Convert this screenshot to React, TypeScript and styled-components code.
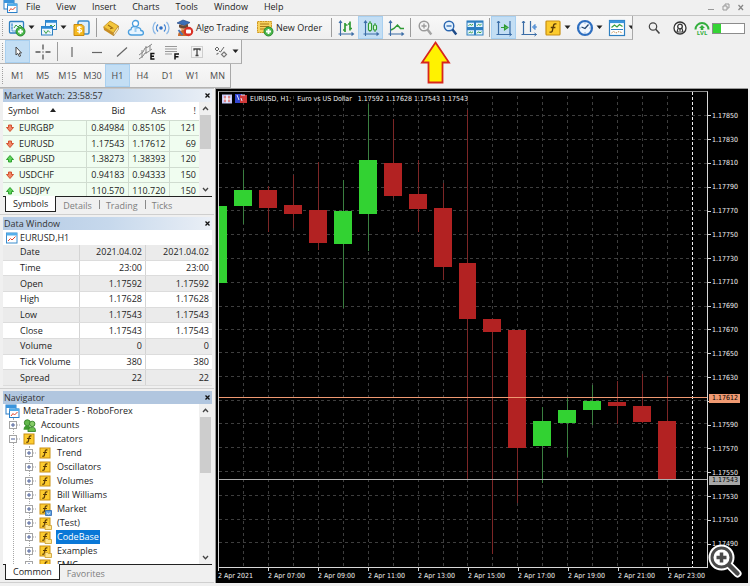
import React from "react";
import styled, { createGlobalStyle, css } from "styled-components";

const UI = `"Open Sans", "Noto Sans", sans-serif`;
const CHART = `"DejaVu Sans Condensed", "DejaVu Sans", "Noto Sans", sans-serif`;

const GlobalStyle = createGlobalStyle`
  *, *::before, *::after { box-sizing: border-box; }
  body { margin: 0; background: #f0f0f0; font-family: ${UI}; font-size: 9px; color: #1c1c1c; }
  button { font: inherit; color: inherit; background: none; border: 0; padding: 0; margin: 0; }
  svg { display: block; flex: none; }
  ul { list-style: none; margin: 0; padding: 0; }
`;

/* ---------- layout ---------- */

const Page = styled.div`
  position: relative;
  display: flex;
  flex-direction: column;
  height: 100vh;
  min-height: 480px;
  overflow: hidden;
  background: #f0f0f0;
`;

const MenuBar = styled.nav`
  display: flex;
  align-items: center;
  height: 16px;
  padding: 0 5px 2px 3px;
  border-bottom: 1px solid #c4c4c4;
`;

const MenuItems = styled.div`
  display: flex;
  gap: 16px;
  margin-left: 8px;
`;

const WindowButtons = styled.div`
  display: flex;
  gap: 7px;
  margin-left: auto;
`;

const ToolRow = styled.div`
  display: flex;
  height: 24px;
`;

const Strip = styled.div`
  display: flex;
  align-items: stretch;
  padding-left: 5px;
  border-right: 1px solid #a8a8a8;
  border-bottom: 1px solid #b4b4b4;
  background: linear-gradient(#f8f8f8, #efefef);
  position: relative;
  &::before {
    content: "";
    position: absolute;
    left: 2px;
    top: 3px;
    bottom: 3px;
    border-left: 1px dotted #a0a0a0;
  }
`;

const StatusArea = styled.div`
  display: flex;
  align-items: center;
  gap: 2px;
  margin-left: auto;
  padding-right: 5px;
`;

const Tool = styled.button<{ $active?: boolean; $width?: number; $left?: boolean }>`
  display: flex;
  align-items: center;
  justify-content: ${(p) => (p.$left ? "flex-start" : "center")};
  gap: 2px;
  width: ${(p) => p.$width ?? 25}px;
  padding-left: ${(p) => (p.$left ? 3 : 0)}px;
  overflow: hidden;
  white-space: nowrap;
  ${(p) =>
    p.$active &&
    css`
      background: #c3def4;
      box-shadow: inset 0 0 0 1px #a9d0f0;
    `}
`;

const TimeframeTool = styled(Tool)`
  color: #4c4c4c;
`;

const Divider = styled.span`
  width: 4px;
  padding: 2px 0;
  display: flex;
  justify-content: center;
  &::before {
    content: "";
    width: 1px;
    background: #9c9c9c;
  }
`;

const Gauge = styled.div`
  width: 33px;
  height: 11px;
  border: 1px solid #8c8c8c;
  background: #fff;
  &::before {
    content: "";
    display: block;
    width: 8px;
    height: 9px;
    background: #35d435;
  }
`;

const Workspace = styled.main`
  flex: 1;
  min-height: 0;
  display: flex;
  gap: 1px;
  padding: 0 2px 3px 0;
`;

const Sidebar = styled.aside`
  display: flex;
  flex-direction: column;
  gap: 2px;
  width: 214px;
  flex: none;
  border-top: 1px solid #c8c8c8;
`;

/* ---------- dock panels ---------- */

const Panel = styled.section<{ $grow?: boolean }>`
  display: flex;
  flex-direction: column;
  padding: 0 2px 1px 3px;
  border-bottom: 1px solid #cfcfcf;
  ${(p) => p.$grow && "flex: 1; min-height: 0;"}
`;

const PanelTitle = styled.header<{ $active?: boolean }>`
  display: flex;
  align-items: center;
  justify-content: space-between;
  height: 13px;
  padding: 0 2px 0 1px;
  font-size: 9px;
  line-height: 13px;
  color: #333;
  background: ${(p) =>
    p.$active ? "#b1c6df" : "linear-gradient(90deg, #b4cae4 0%, #c6d8ec 50%, #eaeff6 100%)"};
  h2 { margin: 0; font: inherit; }
`;

const PanelBody = styled.div<{ $grow?: boolean }>`
  display: flex;
  background: #fff;
  overflow: hidden;
  ${(p) => p.$grow && "flex: 1; min-height: 0;"}
`;

const MarketBody = styled(PanelBody)`
  height: 94px;
`;

const ScrollTrack = styled.div`
  display: flex;
  flex-direction: column;
  align-items: center;
  width: 13px;
  flex: none;
  background: #f0f0f0;
`;

const ScrollArrow = styled.button`
  display: flex;
  align-items: center;
  justify-content: center;
  width: 13px;
  height: 13px;
`;

const ScrollThumb = styled.div<{ $height: number }>`
  width: 11px;
  height: ${(p) => p.$height}px;
  margin-bottom: auto;
  background: #cdcdcd;
`;

const MarketTable = styled.table`
  flex: 1;
  height: 97px;
  border-collapse: collapse;
  table-layout: fixed;
  line-height: 12px;
  th, td { padding: 0 3px; text-align: right; font-weight: 400; white-space: nowrap; }
  th { height: 18px; background: #fff; }
  th:first-child { text-align: left; padding-left: 5px; }
  td { background: #f0fdf0; border: 1px solid #d0dcd0; border-left: 0; }
  td:last-child { border-right: 0; }
`;

const SymbolCell = styled.span`
  display: flex;
  align-items: center;
  gap: 5px;
`;

const SortMark = styled.span`
  display: inline-block;
  margin: 0 0 2px 11px;
  border: 3px solid transparent;
  border-top: 0;
  border-bottom: 4px solid #222;
`;

const Tabs = styled.div`
  display: flex;
  height: 17px;
  border-top: 1px solid #222;
  background: #f0f0f0;
  line-height: 15px;
`;

const Tab = styled.button<{ $active?: boolean }>`
  position: relative;
  height: 16px;
  padding: 0 7px;
  color: #7e7e7e;
  ${(p) =>
    p.$active
      ? css`
          margin: -1px 0 0 2px;
          color: #1c1c1c;
          background: #fff;
          border: 1px solid #222;
          border-top: 0;
        `
      : css`
          & + &::before {
            content: "";
            position: absolute;
            left: 0;
            top: 3px;
            height: 9px;
            border-left: 1px solid #8a8a8a;
          }
        `}
`;

const DataHeading = styled.h3`
  display: flex;
  align-items: center;
  gap: 2px;
  height: 15px;
  margin: 0;
  padding-left: 3px;
  font: inherit;
  background: #fff;
`;

const DataTable = styled.table`
  width: 100%;
  height: 141px;
  margin-bottom: 1px;
  border-collapse: collapse;
  table-layout: fixed;
  line-height: 12px;
  background: #fff;
  tr:nth-child(odd) { background: #ebebeb; }
  th, td { padding: 0 3px; font-weight: 400; text-align: right; border-bottom: 1px solid #dcdcdc; }
  th { width: 76px; text-align: left; padding-left: 17px; }
  td { border-left: 1px solid #d4d4d4; }
`;

const Tree = styled.ul`
  flex: 1;
  overflow: hidden;
  height: 100%;
`;

const TreeBox = styled.div`
  flex: 1;
  min-width: 0;
  overflow: hidden;
`;

const Branch = styled.ul`
  position: relative;
  margin-left: 10px;
  &::before {
    content: "";
    position: absolute;
    left: 0;
    top: 0;
    bottom: 0;
    border-left: 1px dotted #a8a8a8;
  }
`;

const SubBranch = styled(Branch)`
  margin-left: 16px;
`;

const TreeRow = styled.div<{ $root?: boolean }>`
  display: flex;
  align-items: center;
  height: 14px;
  gap: 2px;
  padding-left: ${(p) => (p.$root ? 2 : 0)}px;
  line-height: 14px;
`;

const Expander = styled.button`
  position: relative;
  width: 12px;
  height: 8px;
  margin-left: -4px;
  display: flex;
`;

const Label = styled.span<{ $selected?: boolean }>`
  margin-left: 2px;
  padding: 0 1px;
  ${(p) => p.$selected && "background: #0a78d7; color: #fff;"}
`;

const RootLabel = styled(Label)`
  margin-left: 0;
`;

/* ---------- chart ---------- */

const ChartFrame = styled.section`
  position: relative;
  flex: 1;
  min-width: 0;
  display: grid;
  grid-template-columns: 1fr 40px;
  grid-template-rows: 1fr 15px;
  padding: 2px 0 0 2px;
  background: #000;
  border: 1px solid #9a9a9a;
  border-right: 0;
  border-bottom: 0;
  color: #f0f0f0;
  font-family: ${CHART};
  font-size: 7px;
`;

const Plot = styled.div`
  position: relative;
  min-width: 0;
  min-height: 0;
  border: 1px solid #d8d8d8;
  border-top-color: #8c8c8c;
  > svg { width: 100%; height: 100%; }
`;

const ChartTitle = styled.div`
  position: absolute;
  left: 3px;
  top: 2px;
  display: flex;
  align-items: center;
  gap: 3px;
  height: 10px;
  white-space: pre;
`;

const TitlePart = styled.span`
  margin-left: 3px;
`;

const PriceAxis = styled.div`
  position: relative;
  display: grid;
  grid-auto-rows: 1fr;
  padding: 13px 0 12px;
  min-height: 0;
`;

const PriceMark = styled.span`
  display: flex;
  align-items: center;
  gap: 1px;
  min-height: 0;
  line-height: 8px;
  &::before {
    content: "";
    width: 3px;
    height: 1px;
    background: #d8d8d8;
  }
`;

const PriceTag = styled.span<{ $top: string; $color: string }>`
  position: absolute;
  left: 1px;
  top: ${(p) => p.$top};
  width: 31px;
  height: 9px;
  margin-top: -5px;
  padding-left: 3px;
  line-height: 9px;
  color: #000;
  background: ${(p) => p.$color};
`;

const TimeAxis = styled.div`
  display: grid;
  grid-template-columns: repeat(9, 10fr) 8fr;
`;

const TimeMark = styled.span`
  min-width: 0;
  white-space: nowrap;
  line-height: 10px;
  &::before {
    content: "";
    display: block;
    width: 1px;
    height: 3px;
    background: #d8d8d8;
  }
`;

const Magnifier = styled.button`
  position: absolute;
  right: 6px;
  bottom: 5px;
`;

const Pointer = styled.div`
  position: absolute;
  left: 420px;
  top: 40px;
`;

/* ---------- icons ---------- */

const Icon = ({ children, size = 18 }: { children: React.ReactNode; size?: number }) => (
  <svg width={size} height={size} viewBox={`0 0 ${size} ${size}`} fill="none" aria-hidden="true">
    {children}
  </svg>
);

const Caret = () => (
  <svg width="7" height="5" viewBox="0 0 7 5" aria-hidden="true">
    <path d="M0.5 0.5h6L3.5 4z" fill="#222" />
  </svg>
);

const AppLogo = () => (
  <Icon size={15}>
    <rect x="1" y="1" width="10" height="9" fill="#fff" stroke="#2a7fc8" />
    <rect x="1" y="1" width="10" height="3" fill="#3a94dc" />
    <rect x="4.500" y="5" width="9.500" height="8.500" fill="#fff" stroke="#2a7fc8" />
    <rect x="4.500" y="4.500" width="9.500" height="2.500" fill="#55aeea" />
    <path d="M6 12l2-2.500 1.500 1.500 3-3" stroke="#e0442c" />
  </Icon>
);

const MiniChart = () => (
  <Icon size={12}>
    <rect x="0.500" y="1" width="10.500" height="10" fill="#fff" stroke="#3a8ccc" />
    <rect x="0.500" y="1" width="10.500" height="2.500" fill="#55aeea" />
    <path d="M2 9l2.500-2.500L6 8l3.500-3.500" stroke="#e0442c" />
  </Icon>
);

const NewChartIcon = () => (
  <Icon>
    <rect x="1.500" y="2.500" width="14" height="11.500" rx="1" fill="#eaf6ff" stroke="#2d7fc0" strokeWidth="1.300" />
    <path d="M4 4v8M3 6h2M3 9h2M4 12h9" stroke="#3a8ccc" strokeWidth=".8" />
    <path d="M6 9l2-3 2 2 2-2 2 2" stroke="#3aa040" />
    <circle cx="12.500" cy="12.500" r="4.500" fill="#49b64a" stroke="#2b8a30" />
    <path d="M12.500 10v5M10 12.500h5" stroke="#fff" strokeWidth="1.800" />
  </Icon>
);

const ProfilesIcon = () => (
  <Icon>
    <rect x="5.500" y="1.500" width="11" height="9" fill="#eaf6ff" stroke="#2d7fc0" />
    <path d="M5.500 2.500h11" stroke="#2d8ad6" strokeWidth="2.500" />
    <path d="M9 8l2-2 2 2 2-2" stroke="#3aa040" />
    <rect x="1.500" y="7.500" width="11" height="8.500" fill="#eaf6ff" stroke="#2d7fc0" />
    <path d="M1.500 8.500h11" stroke="#2d8ad6" strokeWidth="2.500" />
    <path d="M4 11.500l2 3 2-3 2 2" stroke="#3aa040" />
  </Icon>
);

const MarketIcon = () => (
  <Icon>
    <rect x="5" y="2" width="11" height="13" rx="1.500" fill="#dceffc" stroke="#3a8ccc" strokeWidth="1.500" />
    <path d="M1 5.500h8l2 2V16.500H1z" fill="#f4b921" stroke="#c98a10" />
    <path d="M8.500 8.500c-1-1-4.500-1-4 .8.400 1.400 3.600.6 4 2.200.3 1.700-3 1.800-4.200.6M6.300 7v7.500" stroke="#fff" strokeWidth="1.200" />
  </Icon>
);

const BookIcon = () => (
  <Icon>
    <path d="M1.500 8L8 2l8.500 5-5 7z" fill="#f3c63c" stroke="#c08a18" strokeWidth=".8" />
    <path d="M1.500 8l10 6v3L2 11z" fill="#c88d22" />
    <path d="M11.500 14l5-7v3l-5 7z" fill="#fff2c8" stroke="#a87620" strokeWidth=".6" />
    <path d="M6 6l4.500 3-2.500.8" stroke="#9c6c14" strokeWidth="1.200" />
  </Icon>
);

const CloudIcon = () => (
  <Icon>
    <circle cx="8.500" cy="4.500" r="3" fill="#fff" stroke="#4a9ede" strokeWidth="1.300" />
    <path d="M4.500 16c-4-.3-4-5-.6-5.300C4 7.500 8 6.500 9.500 9c3-1 4.700.6 4.300 2.500C17.500 12 17 16 14 16z" fill="#e8f5ff" stroke="#4a9ede" strokeWidth="1.300" />
    <path d="M8.500 8v5" stroke="#9cccf0" strokeWidth="2" />
  </Icon>
);

const SignalIcon = () => (
  <Icon>
    <circle cx="9" cy="9" r="1.800" fill="#2f6ec4" />
    <path d="M6 5.500a5 5 0 000 7M12 5.500a5 5 0 010 7" stroke="#4385d4" strokeWidth="1.300" />
    <path d="M3.500 3a8.400 8.400 0 000 12M14.500 3a8.400 8.400 0 010 12" stroke="#8db9e6" strokeWidth="1.300" />
  </Icon>
);

const AlgoIcon = () => (
  <Icon>
    <circle cx="8" cy="7.500" r="4" fill="#e0a070" />
    <path d="M1 4l6-3 7 2.500-5.500 3z" fill="#3b6fb8" stroke="#274c86" strokeWidth=".7" />
    <path d="M3 5.500v3l5 1 4-1V5L8 7z" fill="#6a4a34" />
    <path d="M2 17c0-4 2-6 6-6s5 2 5 6z" fill="#c96a2b" />
    <path d="M2.500 11l4 5" stroke="#4a78b8" strokeWidth="2" />
    <circle cx="12.500" cy="12.500" r="4.700" fill="#d93025" />
    <rect x="10" y="10.500" width="5" height="4" rx="1" fill="#fff" />
  </Icon>
);

const NewOrderIcon = () => (
  <Icon>
    <path d="M1.500 2.500h14v11h-14z" fill="#f8d25e" stroke="#d09a20" strokeDasharray="2 .5" />
    <path d="M4 5h9M4 7.500h9M4 10h7" stroke="#a87818" />
    <circle cx="12.500" cy="12.500" r="4.500" fill="#49b64a" stroke="#2b8a30" />
    <path d="M12.500 10v5M10 12.500h5" stroke="#fff" strokeWidth="1.800" />
  </Icon>
);

const Axes = () => (
  <path d="M3.500 2v13h13M2 4l1.500-2L5 4M14.500 13.500l2 1.500-2 1.500M1.500 15h2v2" stroke="#3a6ca6" strokeWidth="1.100" />
);

const BarsIcon = () => (
  <Icon>
    <Axes />
    <path d="M8 4v9M6 11h2M8 6h2.500M13 2.500v9M11 5h2M13 9.500h2" stroke="#2f9a34" strokeWidth="1.700" />
  </Icon>
);

const CandlesIcon = () => (
  <Icon>
    <Axes />
    <path d="M8 2v2M8 11v2M13 4v2M13 11v2" stroke="#2f9a34" />
    <rect x="6.500" y="4" width="3" height="7.500" rx="1" fill="#e6ffe6" stroke="#2f9a34" strokeWidth="1.200" />
    <rect x="11.500" y="6" width="3" height="5" rx="1" fill="#e6ffe6" stroke="#2f9a34" strokeWidth="1.200" />
  </Icon>
);

const LineIcon = () => (
  <Icon>
    <Axes />
    <path d="M4 11l3-1.500L10.500 6l3 3.500h3.500" stroke="#2f9a34" strokeWidth="1.500" />
  </Icon>
);

const ZoomIcon = ({ plus }: { plus?: boolean }) => {
  const c = plus ? "#9a9a9a" : "#2a66b0";
  return (
    <Icon>
      <circle cx="8" cy="7" r="4.800" fill={plus ? "#f4f4f4" : "#e2f0fc"} stroke={c} strokeWidth="1.400" />
      <path d="M11.500 10.500l3.800 5" stroke={plus ? "#a4a4a4" : "#1d4a88"} strokeWidth="2.400" />
      <path d={plus ? "M5.500 7h5M8 4.500v5" : "M5.500 7h5"} stroke={c} strokeWidth="1.300" />
    </Icon>
  );
};

const TileIcon = () => (
  <Icon>
    {[[1, 2], [9.5, 2], [1, 9.5], [9.5, 9.5]].map(([x, y]) => (
      <g key={`${x}-${y}`}>
        <rect x={x} y={y} width="7.500" height="6.500" fill="#e4f3ff" stroke="#2d7fc0" />
        <path d={`M${x} ${y + 0.8}h7.5`} stroke="#2d7fc0" strokeWidth="1.800" />
        <path d={`M${x + 1.5} ${y + 4.8}l1.500-1.500 1.500 1 1.500-1`} stroke="#3aa040" />
      </g>
    ))}
  </Icon>
);

const AutoScrollIcon = () => (
  <Icon>
    <path d="M3.500 2v13M1.500 15.500h15M15 2v14" stroke="#3a6ca6" strokeWidth="1.200" />
    <path d="M2 4l1.500-2L5 4M14.500 14l2 1.500-2 1.500" stroke="#3a6ca6" />
    <path d="M6 8.500h4M9.500 6l3.500 2.500L9.500 11z" stroke="#2f9a34" strokeWidth="1.100" fill="#5fc463" />
  </Icon>
);

const ShiftIcon = () => (
  <Icon>
    <path d="M3.500 2v13M1.500 15.500h15M10.500 2v11" stroke="#3a6ca6" strokeWidth="1.200" />
    <path d="M2 4l1.500-2L5 4M14.500 14l2 1.500-2 1.500" stroke="#3a6ca6" />
    <path d="M17 8h-2.500M15 5.500L12.500 8l2.500 2.500z" stroke="#3f80cc" fill="#8ebcf0" />
  </Icon>
);

const FxIcon = () => (
  <Icon>
    <rect x="2" y="2" width="14" height="14" rx="1" fill="#fccb2e" stroke="#c98f12" strokeWidth="1.200" />
    <path d="M12.500 5c-2-.6-2.800.2-3.200 2.300L8.400 11.500c-.3 1.500-1.200 2-2.900 1.500M6.800 8.500h4.600" stroke="#5a3a06" strokeWidth="1.300" />
  </Icon>
);

const ClockIcon = () => (
  <Icon>
    <circle cx="9" cy="9" r="7" fill="#f2f8ff" stroke="#2f6fc0" strokeWidth="2.200" />
    <path d="M9 3.500v1M9 13.500v1M3.500 9h1M13.500 9h1" stroke="#4d7cb4" />
    <path d="M5.500 8L9 9.500l3.500-4" stroke="#22456f" strokeWidth="1.300" />
  </Icon>
);

const TemplateIcon = () => (
  <Icon>
    <rect x="1.500" y="1.500" width="15" height="15" fill="#fff" stroke="#2d7fc0" strokeWidth="1.200" />
    <path d="M1.500 2.800h15" stroke="#3b95dc" strokeWidth="2.600" />
    <path d="M3.500 8.500l3-2.500 2.500 2 2.500-2.500 3 2" stroke="#3aa040" strokeWidth="1.300" />
    <path d="M3 10.500h12" stroke="#2d7fc0" />
    <path d="M3.500 14l2-1.500 2.500 1.500 3-1.500 3.500 1.500" stroke="#c08a4a" strokeDasharray="1.500 1" />
  </Icon>
);

const SearchIcon = () => (
  <Icon size={14}>
    <circle cx="6" cy="5.500" r="3.700" stroke="#444" strokeWidth="1.200" />
    <path d="M8.700 8.300L12.500 12.500" stroke="#444" strokeWidth="1.600" />
  </Icon>
);

const UserIcon = () => (
  <Icon size={14}>
    <circle cx="7" cy="7" r="6" fill="#fafafa" stroke="#333" strokeWidth="1.300" />
    <circle cx="7" cy="5.500" r="2.300" stroke="#333" strokeWidth="1.300" />
    <path d="M5 7.500L4 11h6L9 7.500M7 8v2" stroke="#333" strokeWidth="1.100" />
  </Icon>
);

const LvlBadge = styled.span`
  display: flex;
  flex-direction: column;
  align-items: center;
  color: #32ae3c;
  font-weight: 700;
  font-size: 6px;
  line-height: 6px;
`;

const DownMark = () => (
  <svg width="8" height="8" viewBox="0 0 8 8" aria-label="down">
    <path d="M2.500 1h3v2.500h2L4 7.500.5 3.500h2z" fill="#f08868" stroke="#cf4422" strokeWidth=".9" />
  </svg>
);
const UpMark = () => (
  <svg width="8" height="8" viewBox="0 0 8 8" aria-label="up">
    <path d="M2.500 7h3V4.500h2L4 .5.500 4.500h2z" fill="#5fd45a" stroke="#259a25" strokeWidth=".9" />
  </svg>
);

const CloseX = () => (
  <svg width="5" height="5" viewBox="0 0 5 5">
    <path d="M.5.5l4 4M4.500.5l-4 4" stroke="#111" strokeWidth="1.300" />
  </svg>
);

const Chevron = ({ up }: { up?: boolean }) => (
  <svg width="7" height="5" viewBox="0 0 7 5" fill="none">
    <path d={up ? "M1 4l2.500-2.800L6 4" : "M1 1l2.500 2.800L6 1"} stroke="#444" strokeWidth="1.300" />
  </svg>
);

const AccountsIcon = () => (
  <svg width="13" height="13" viewBox="0 0 12 12" fill="none" aria-hidden="true">
    <circle cx="4" cy="3.500" r="2.800" fill="#62b84c" stroke="#2e7d22" strokeWidth=".8" />
    <circle cx="8.500" cy="4.500" r="2.500" fill="#86cc68" stroke="#2e7d22" strokeWidth=".8" />
    <path d="M.5 10c0-3 1.500-4 3.500-4s3 1 3.500 4z" fill="#3f9a30" />
    <path d="M4.500 11.500c0-3 1.800-4 4-4s3 1 3 4z" fill="#6cbf50" stroke="#2e7d22" strokeWidth=".8" />
  </svg>
);

const FolderFx = ({ badge }: { badge?: "folder" | "market" }) => (
  <Icon size={13}>
    <rect x="1" y="1" width="10" height="10" fill="#fccb2e" stroke="#c98f12" />
    <path d="M8.500 3C6.500 2.500 6.300 3.500 6 5L5.400 8c-.3 1.300-1 1.500-2.200 1M4 5.500h4" stroke="#5a3a06" strokeWidth="1.200" />
    {badge === "folder" && <path d="M6 7.500h2.500l.8 1H12.500v4H6z" fill="#ffe48a" stroke="#c99a28" strokeWidth=".8" />}
    {badge === "market" && (
      <>
        <path d="M6.500 7.500H12.500v5H6.500z" fill="#5a9fe0" stroke="#2a66b0" strokeWidth=".8" />
        <path d="M8 9.500a1.500 1.500 0 003 0" stroke="#fff" strokeWidth=".8" />
      </>
    )}
  </Icon>
);

const ExpandGlyph = ({ open }: { open?: boolean }) => (
  <svg width="12" height="8" viewBox="0 0 12 8" fill="none">
    <path d="M8 4h4" stroke="#a8a8a8" strokeDasharray="1 1" />
    <rect x=".5" y=".5" width="7" height="7" fill="#fff" stroke="#a4a4a4" />
    <path d={open ? "M2 4h4" : "M2 4h4M4 2v4"} stroke="#4a5e98" />
  </svg>
);

/* ---------- data ---------- */

const menus = ["File", "View", "Insert", "Charts", "Tools", "Window", "Help"];
const timeframes = ["M1", "M5", "M15", "M30", "H1", "H4", "D1", "W1", "MN"];

const quotes = [
  { symbol: "EURGBP", bid: "0.84984", ask: "0.85105", spread: "121", up: false },
  { symbol: "EURUSD", bid: "1.17543", ask: "1.17612", spread: "69", up: false },
  { symbol: "GBPUSD", bid: "1.38273", ask: "1.38393", spread: "120", up: true },
  { symbol: "USDCHF", bid: "0.94183", ask: "0.94333", spread: "150", up: false },
  { symbol: "USDJPY", bid: "110.570", ask: "110.720", spread: "150", up: true },
];

const barData = [
  ["Date", "2021.04.02"],
  ["Time", "23:00"],
  ["Open", "1.17592"],
  ["High", "1.17628"],
  ["Low", "1.17543"],
  ["Close", "1.17543"],
  ["Volume", "0"],
  ["Tick Volume", "380"],
  ["Spread", "22"],
];

const indicators: { name: string; badge?: "folder" | "market" }[] = [
  { name: "Trend" },
  { name: "Oscillators" },
  { name: "Volumes" },
  { name: "Bill Williams" },
  { name: "Market", badge: "market" },
  { name: "(Test)", badge: "folder" },
  { name: "CodeBase", badge: "folder" },
  { name: "Examples", badge: "folder" },
  { name: "FMIC", badge: "folder" },
];

const prices = Array.from({ length: 19 }, (_, i) => ((117850 - i * 20) / 100000).toFixed(5));
/* the ask tag covers this level, so only its tick is drawn */
const coveredPrice = "1.17610";
const times = ["2021", "07:00", "09:00", "11:00", "13:00", "15:00", "17:00", "19:00", "21:00", "23:00"];

/* plot units: one candle every 25, y grows downwards: [high, top, bottom, low, rising] */
const candles: [number, number, number, number, boolean][] = [
  [114, 114, 191, 191, true],
  [78, 98, 114, 132, true],
  [94, 98, 116, 140, false],
  [83, 113, 122, 136, false],
  [70, 118, 151, 158, false],
  [88, 119, 152, 216, true],
  [12, 68, 122, 159, true],
  [27, 71, 104, 106, false],
  [68, 102, 117, 140, false],
  [91, 116, 175, 188, false],
  [18, 171, 227, 388, false],
  [227, 227, 241, 463, false],
  [238, 238, 357, 412, false],
  [316, 330, 355, 392, true],
  [307, 319, 332, 366, true],
  [294, 310, 319, 334, true],
  [290, 311, 315, 333, false],
  [283, 315, 331, 332, false],
  [285, 330, 389, 389, false],
];

/* ---------- parts ---------- */

const ToolIcon = ({ name, children, active }: { name: string; children: React.ReactNode; active?: boolean }) => (
  <Tool aria-label={name} title={name} $active={active}>
    {children}
  </Tool>
);

const DropTool = ({ name, children, width = 32 }: { name: string; children: React.ReactNode; width?: number }) => (
  <Tool aria-label={name} title={name} $left $width={width}>
    {children}
    <Caret />
  </Tool>
);

const ScrollBar = ({ thumb }: { thumb: number }) => (
  <ScrollTrack>
    <ScrollArrow aria-label="Scroll up"><Chevron up /></ScrollArrow>
    <ScrollThumb $height={thumb} />
    <ScrollArrow aria-label="Scroll down"><Chevron /></ScrollArrow>
  </ScrollTrack>
);

const Title = ({ text, active }: { text: string; active?: boolean }) => (
  <PanelTitle $active={active}>
    <h2>{text}</h2>
    <button aria-label={`Close ${text}`}><CloseX /></button>
  </PanelTitle>
);

const PlotDrawing = () => (
  <svg viewBox="0 0 489 476" preserveAspectRatio="none" shapeRendering="crispEdges" role="img" aria-label="EURUSD hourly candles">
    <g stroke="#3e3e3e" strokeDasharray="3 3">
      {prices.map((p, i) => {
        const y = Math.round(23.3 + i * 23.78) + 0.5;
        return <line key={p} x1="0" x2="489" y1={y} y2={y} />;
      })}
      {Array.from({ length: 18 }, (_, i) => (
        <line key={i} x1={24.5 + i * 25} x2={24.5 + i * 25} y1="4" y2="476" />
      ))}
    </g>
    <line x1="474.500" x2="474.500" y1="0" y2="476" stroke="#f0f0f0" strokeDasharray="3 2" />
    {candles.map(([high, top, bottom, low, rising], i) => {
      const x = i * 25;
      return (
        <g key={x}>
          <line x1={x - 0.5} x2={x - 0.5} y1={high} y2={low} stroke={rising ? "#3a8040" : "#7c2626"} />
          <rect x={x - 10} y={top} width="18" height={bottom - top} fill={rising ? "#32d232" : "#b22222"} />
        </g>
      );
    })}
    <line x1="0" x2="489" y1="306.500" y2="306.500" stroke="#f09a72" />
    <line x1="0" x2="489" y1="388.500" y2="388.500" stroke="#b0b0b0" />
  </svg>
);

export default function App() {
  return (
    <Page>
      <GlobalStyle />
      <MenuBar>
        <AppLogo />
        <MenuItems>
          {menus.map((m) => <button key={m}>{m}</button>)}
        </MenuItems>
        <WindowButtons>
          <button aria-label="Minimize"><Icon size={8}><path d="M1 6.500h6" stroke="#999" /></Icon></button>
          <button aria-label="Restore"><Icon size={8}><path d="M1 3h4v4H1zM3 3V1h4v4H5" stroke="#999" /></Icon></button>
          <button aria-label="Close"><Icon size={8}><path d="M1.500 2l4.500 5M6 2L1.500 7" stroke="#888" strokeWidth="1.300" /></Icon></button>
        </WindowButtons>
      </MenuBar>

      <ToolRow>
        <Strip role="toolbar" aria-label="Standard">
          <DropTool name="New chart"><NewChartIcon /></DropTool>
          <DropTool name="Profiles"><ProfilesIcon /></DropTool>
          <ToolIcon name="Market"><MarketIcon /></ToolIcon>
          <Divider />
          <ToolIcon name="Editor"><BookIcon /></ToolIcon>
          <ToolIcon name="Cloud"><CloudIcon /></ToolIcon>
          <ToolIcon name="Signals"><SignalIcon /></ToolIcon>
          <Tool $left $width={80}><AlgoIcon />Algo Trading</Tool>
          <Tool $left $width={76}><NewOrderIcon />New Order</Tool>
          <Divider />
          <ToolIcon name="Bar chart"><BarsIcon /></ToolIcon>
          <ToolIcon name="Candlesticks" active><CandlesIcon /></ToolIcon>
          <ToolIcon name="Line chart"><LineIcon /></ToolIcon>
          <Divider />
          <ToolIcon name="Zoom in"><ZoomIcon plus /></ToolIcon>
          <ToolIcon name="Zoom out"><ZoomIcon /></ToolIcon>
          <ToolIcon name="Tile windows"><TileIcon /></ToolIcon>
          <Divider />
          <ToolIcon name="Auto scroll" active><AutoScrollIcon /></ToolIcon>
          <ToolIcon name="Chart shift"><ShiftIcon /></ToolIcon>
          <DropTool name="Indicators"><FxIcon /></DropTool>
          <DropTool name="Periods"><ClockIcon /></DropTool>
          <DropTool name="Templates" width={27}><TemplateIcon /></DropTool>
        </Strip>
        <StatusArea>
          <Tool $width={24} aria-label="Search"><SearchIcon /></Tool>
          <Tool $width={24} aria-label="Account"><UserIcon /></Tool>
          <LvlBadge>
            <svg width="16" height="9" viewBox="0 0 16 9" fill="none">
              <path d="M1.500 8.500a6.500 6.500 0 0113 0" stroke="#32ae3c" strokeWidth="2" />
              <path d="M8 4l3 3H9.300v2H6.700V7H5z" fill="#32ae3c" />
            </svg>
            LVL
          </LvlBadge>
          <Gauge role="meter" aria-label="Level" aria-valuenow={25} aria-valuemin={0} aria-valuemax={100} />
        </StatusArea>
      </ToolRow>

      <ToolRow>
        <Strip role="toolbar" aria-label="Line studies">
          <ToolIcon name="Cursor" active>
            <Icon><path d="M7 4v8l1.800-1.600L10.300 13.500l1.300-.6L10.300 10H12.500z" fill="#fff" stroke="#444" /></Icon>
          </ToolIcon>
          <ToolIcon name="Crosshair">
            <Icon><path d="M9 1.500v5M9 11.500v5M1.500 9h5M11.500 9h5M8.500 9h1" stroke="#555" strokeWidth="1.300" /></Icon>
          </ToolIcon>
          <Divider />
          <ToolIcon name="Vertical line"><Icon><path d="M9 4v10" stroke="#666" strokeWidth="1.200" /></Icon></ToolIcon>
          <ToolIcon name="Horizontal line"><Icon><path d="M4 9.500h10" stroke="#666" strokeWidth="1.200" /></Icon></ToolIcon>
          <ToolIcon name="Trend line"><Icon><path d="M4 13.500l10-9" stroke="#666" strokeWidth="1.200" /></Icon></ToolIcon>
          <ToolIcon name="Equidistant channel">
            <Icon>
              <path d="M1 12l4-3 2-4 3-1 4-3M1 16l4-3 2-3 3-1 4-3M4 7v8M8 3v8M12 2v5" stroke="#888" />
              <path d="M16.500 10.500h-3.500v5.500h3.500M13 13.200h3" stroke="#111" strokeWidth="1.500" />
            </Icon>
          </ToolIcon>
          <ToolIcon name="Fibonacci">
            <Icon>
              <path d="M2 3.500h12M2 6h12M2 8.500h12M2 11h7" stroke="#999" />
              <path d="M16 11H12v5.500M12 13.700H15.500" stroke="#111" strokeWidth="1.500" />
            </Icon>
          </ToolIcon>
          <ToolIcon name="Text">
            <Icon>
              <rect x="3.500" y="3.500" width="11" height="11" stroke="#aaa" strokeDasharray="1 1" />
              <path d="M6 7.500V6h6v1.500M9 6v6.500M7.500 12.500h3" stroke="#444" strokeWidth="1.300" />
            </Icon>
          </ToolIcon>
          <DropTool name="Objects">
            <Icon>
              <path d="M5 4l2 2-2 2-2-2zM7 8l1.500 1L12 4" stroke="#666" />
              <path d="M4.500 11.500l2-1.500M12 9l2.500 2.500L12 14l-2.500-2.500z" stroke="#777" strokeWidth="1.200" />
            </Icon>
          </DropTool>
        </Strip>
      </ToolRow>

      <ToolRow>
        <Strip role="toolbar" aria-label="Timeframes">
          {timeframes.map((t) => <TimeframeTool key={t} $active={t === "H1"}>{t}</TimeframeTool>)}
        </Strip>
      </ToolRow>

      <Workspace>
        <Sidebar>
          <Panel>
            <Title text="Market Watch: 23:58:57" />
            <MarketBody>
              <MarketTable>
                <colgroup>
                  <col />
                  <col width="42" />
                  <col width="41" />
                  <col width="30" />
                </colgroup>
                <thead>
                  <tr><th>Symbol<SortMark /></th><th>Bid</th><th>Ask</th><th>!</th></tr>
                </thead>
                <tbody>
                  {quotes.map((q) => (
                    <tr key={q.symbol}>
                      <td><SymbolCell>{q.up ? <UpMark /> : <DownMark />}{q.symbol}</SymbolCell></td>
                      <td>{q.bid}</td>
                      <td>{q.ask}</td>
                      <td>{q.spread}</td>
                    </tr>
                  ))}
                </tbody>
              </MarketTable>
              <ScrollBar thumb={34} />
            </MarketBody>
            <Tabs role="tablist">
              <Tab $active role="tab" aria-selected>Symbols</Tab>
              <Tab role="tab">Details</Tab>
              <Tab role="tab">Trading</Tab>
              <Tab role="tab">Ticks</Tab>
            </Tabs>
          </Panel>

          <Panel>
            <Title text="Data Window" />
            <DataHeading><MiniChart />EURUSD,H1</DataHeading>
            <DataTable>
              <tbody>
                {barData.map(([k, v]) => (
                  <tr key={k}><th scope="row">{k}</th><td>{v}</td><td>{v}</td></tr>
                ))}
              </tbody>
            </DataTable>
          </Panel>

          <Panel $grow>
            <Title text="Navigator" active />
            <PanelBody $grow>
              <TreeBox>
                <Tree>
                  <li>
                    <TreeRow $root><AppLogo /><RootLabel>MetaTrader 5 - RoboForex</RootLabel></TreeRow>
                    <Branch>
                      <li>
                        <TreeRow>
                          <Expander aria-label="Expand Accounts"><ExpandGlyph /></Expander>
                          <AccountsIcon /><Label>Accounts</Label>
                        </TreeRow>
                      </li>
                      <li>
                        <TreeRow>
                          <Expander aria-label="Collapse Indicators"><ExpandGlyph open /></Expander>
                          <FolderFx /><Label>Indicators</Label>
                        </TreeRow>
                        <SubBranch>
                          {indicators.map((n) => (
                            <li key={n.name}>
                              <TreeRow>
                                <Expander aria-label={`Expand ${n.name}`}><ExpandGlyph /></Expander>
                                <FolderFx badge={n.badge} />
                                <Label $selected={n.name === "CodeBase"}>{n.name}</Label>
                              </TreeRow>
                            </li>
                          ))}
                        </SubBranch>
                      </li>
                    </Branch>
                  </li>
                </Tree>
              </TreeBox>
              <ScrollBar thumb={56} />
            </PanelBody>
            <Tabs role="tablist">
              <Tab $active role="tab" aria-selected>Common</Tab>
              <Tab role="tab">Favorites</Tab>
            </Tabs>
          </Panel>
        </Sidebar>

        <ChartFrame>
          <Plot>
            <PlotDrawing />
            <ChartTitle>
              <Icon size={10}>
                <rect width="10" height="9" y=".5" fill="#c8c8f4" />
                <path d="M3 2v6M7 2v6" stroke="#e08888" strokeWidth="2" />
                <path d="M5 1v8M1 5h8" stroke="#fff" />
              </Icon>
              <Icon size={12}>
                <rect x="0" y="1" width="7" height="9" fill="#3346d0" />
                <rect x="5" y="2" width="7" height="8" fill="#d03a3a" />
                <path d="M2 2l2 5M6 2h4M6 5l1 3" stroke="#dfe4ff" />
              </Icon>
              <span>EURUSD, H1:</span>
              <TitlePart>Euro vs US Dollar</TitlePart>
              <TitlePart>1.17592 1.17628 1.17543 1.17543</TitlePart>
            </ChartTitle>
          </Plot>
          <PriceAxis>
            {prices.map((p) => <PriceMark key={p}>{p === coveredPrice ? null : p}</PriceMark>)}
            <PriceTag $top="64.6%" $color="#f09a72">1.17612</PriceTag>
            <PriceTag $top="81.8%" $color="#a8a8a8">1.17543</PriceTag>
          </PriceAxis>
          <TimeAxis>
            {times.map((t) => <TimeMark key={t}>2 Apr {t}</TimeMark>)}
          </TimeAxis>
          <Magnifier aria-label="Enlarge">
            <svg width="34" height="34" viewBox="0 0 34 34" fill="none">
              <path d="M20 20l9.500 9.500" stroke="#fff" strokeWidth="8" strokeLinecap="round" />
              <circle cx="13.500" cy="13.500" r="9.500" fill="#fff" stroke="#fff" strokeWidth="7" />
              <path d="M19.500 19.500l10 10" stroke="#4a4a4a" strokeWidth="4.500" strokeLinecap="round" />
              <circle cx="13.500" cy="13.500" r="9.500" fill="#fff" stroke="#4a4a4a" strokeWidth="3" />
              <path d="M13.500 8.500v10M8.500 13.500h10" stroke="#4a4a4a" strokeWidth="3.500" />
            </svg>
          </Magnifier>
        </ChartFrame>
      </Workspace>

      <Pointer>
        <svg width="31" height="45" viewBox="0 0 31 45">
          <path d="M15.500 2.500L29 22.500H22.500V42.500H8.500V22.500H2z" fill="#fff200" stroke="#d8261c" strokeWidth="1.800" />
        </svg>
      </Pointer>
    </Page>
  );
}
